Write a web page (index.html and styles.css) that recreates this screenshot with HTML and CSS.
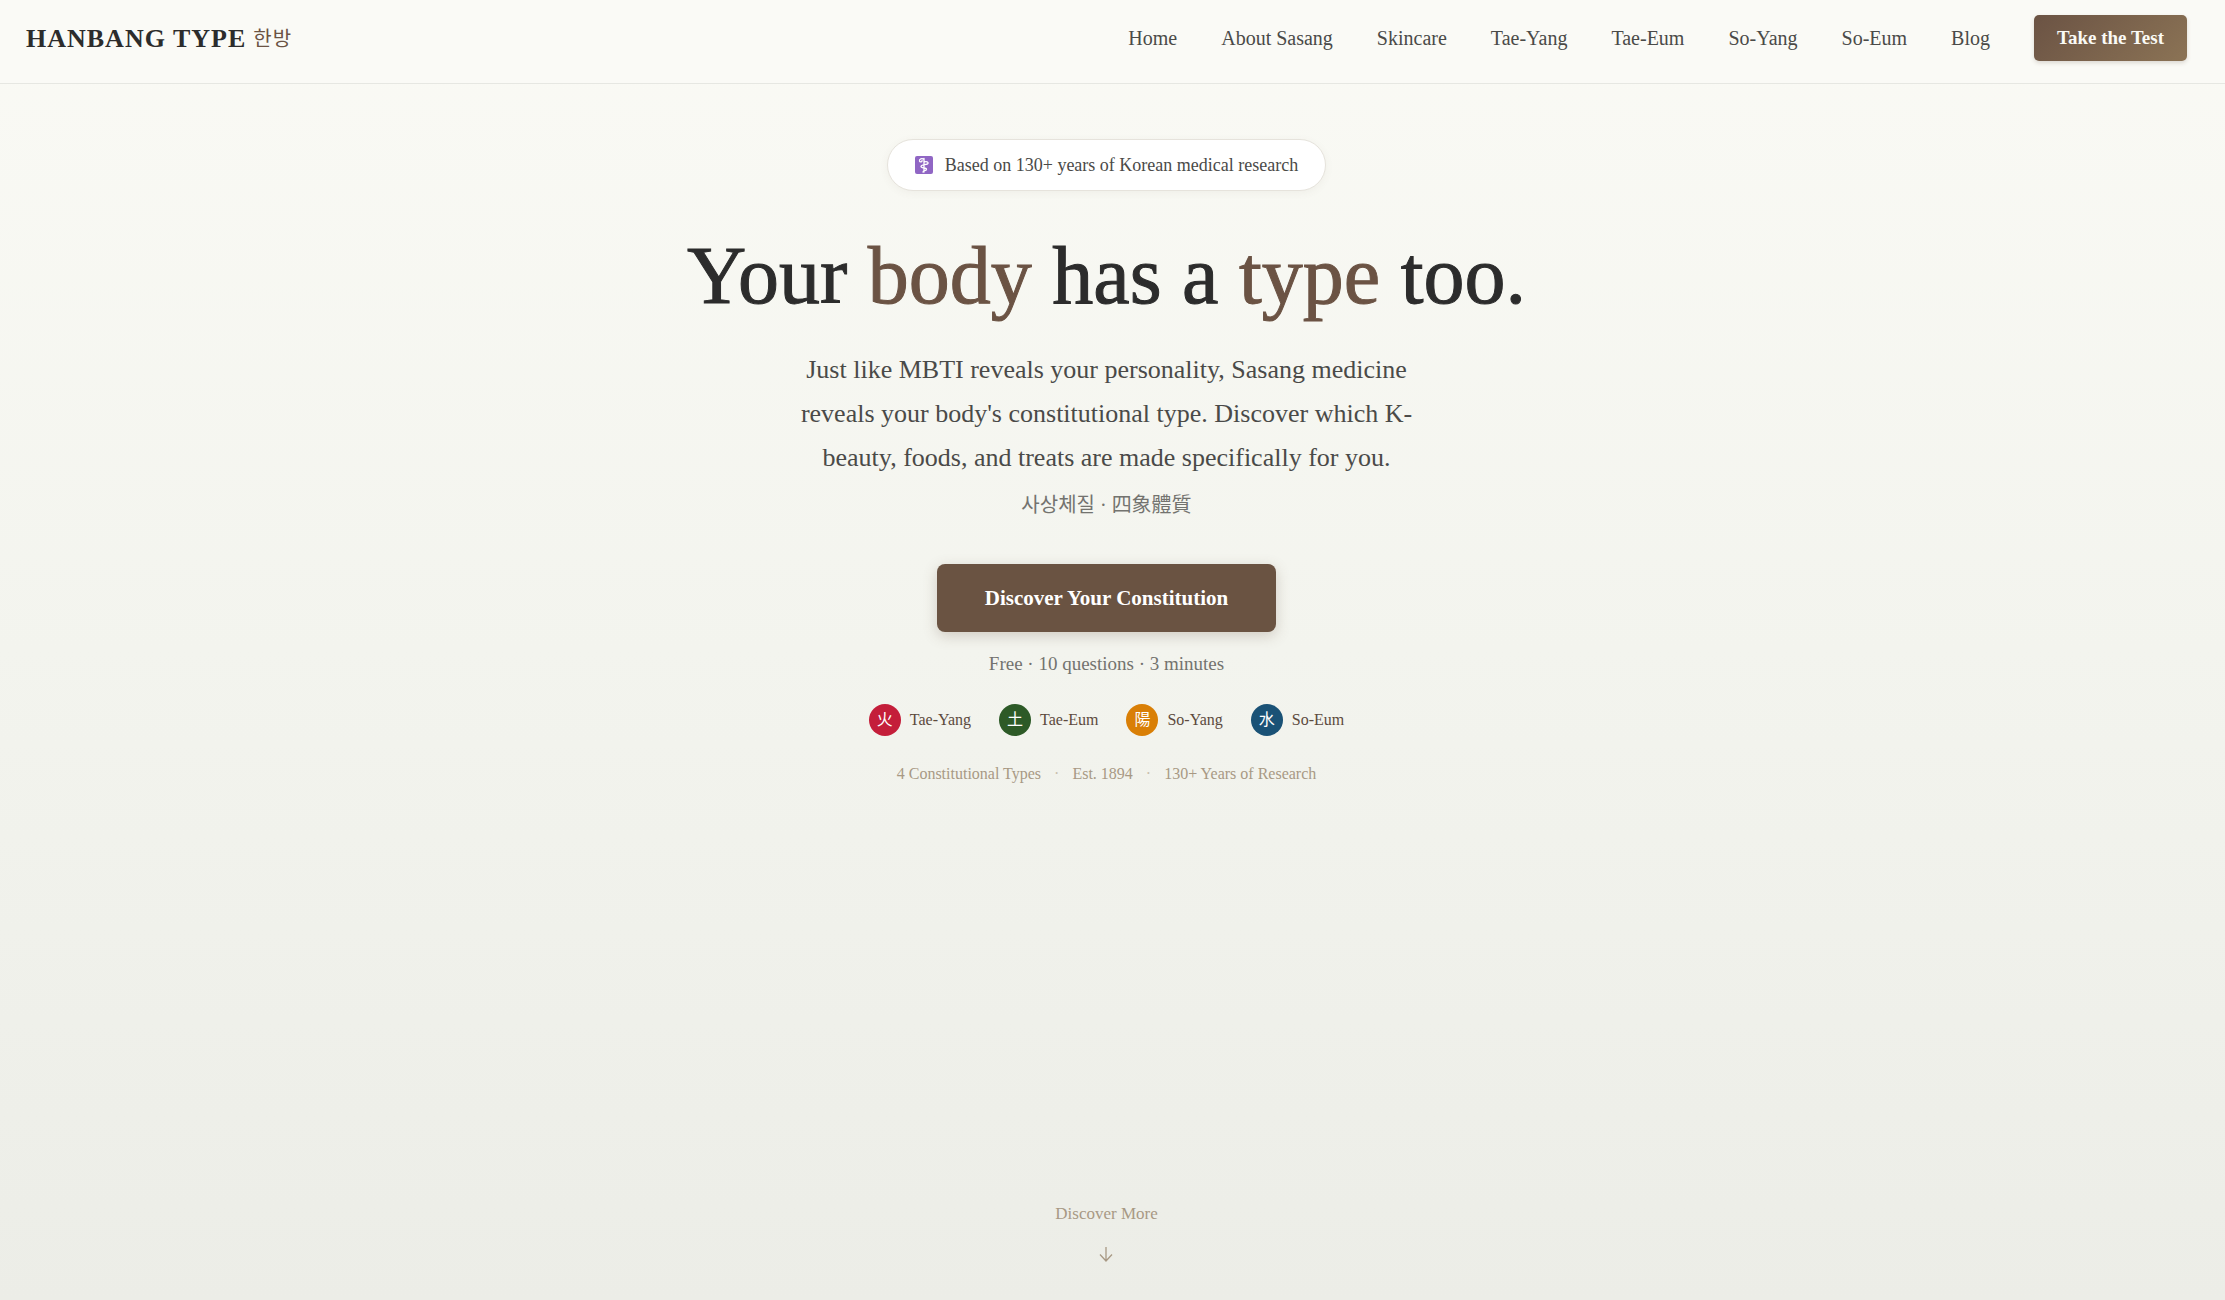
FILE: index.html
```html
<!DOCTYPE html>
<html lang="en">
<head>
<meta charset="utf-8">
<meta name="viewport" content="width=device-width, initial-scale=1">
<title>Hanbang Type</title>
<link rel="stylesheet" href="styles.css">
</head>
<body>
<header class="header">
  <a class="logo" href="#">HANBANG TYPE <span class="logo-ko" lang="ko">한방</span></a>
  <nav class="nav">
    <a href="#">Home</a>
    <a href="#">About Sasang</a>
    <a href="#">Skincare</a>
    <a href="#">Tae-Yang</a>
    <a href="#">Tae-Eum</a>
    <a href="#">So-Yang</a>
    <a href="#">So-Eum</a>
    <a href="#">Blog</a>
    <button class="nav-cta" type="button">Take the Test</button>
  </nav>
</header>
<main class="hero">
  <p class="badge">
    <svg class="badge-icon" viewBox="0 0 18 18" aria-hidden="true">
      <rect width="18" height="18" rx="2" fill="#9066c4"/>
      <path d="M9 2.5V16M9 3.5C7 1.800 4 3 4.500 5C5 6.500 7.500 6 7 4.500M9 6C11.500 5 13.500 6 13 7.500C12.500 9 6 8.500 6 10.500C6 12.500 12 11.500 11.500 13.500C11 15 8 14 8 16" fill="none" stroke="#fff" stroke-width="1.300" stroke-linecap="round"/>
    </svg>
    Based on 130+ years of Korean medical research
  </p>
  <h1 class="title">Your <em>body</em> has a <em>type</em> too.</h1>
  <p class="lead">Just like MBTI reveals your personality, Sasang medicine reveals your body's constitutional type. Discover which K-beauty, foods, and treats are made specifically for you.</p>
  <p class="native" lang="ko">사상체질 · <span lang="zh-Hant">四象體質</span></p>
  <button class="cta" type="button">Discover Your Constitution</button>
  <p class="note">Free · 10 questions · 3 minutes</p>
  <ul class="types">
    <li><span class="dot tae-yang" lang="zh-Hant">火</span>Tae-Yang</li>
    <li><span class="dot tae-eum" lang="zh-Hant">土</span>Tae-Eum</li>
    <li><span class="dot so-yang" lang="zh-Hant">陽</span>So-Yang</li>
    <li><span class="dot so-eum" lang="zh-Hant">水</span>So-Eum</li>
  </ul>
  <p class="facts"><span>4 Constitutional Types</span><span class="sep">·</span><span>Est. 1894</span><span class="sep">·</span><span>130+ Years of Research</span></p>
  <a class="more" href="#">Discover More
    <svg class="more-arrow" viewBox="0 0 14 16" aria-hidden="true"><path d="M7 1V15M1 8.500L7 15L13 8.500" fill="none" stroke="currentColor" stroke-width="1.300"/></svg>
  </a>
</main>
</body>
</html>
```

FILE: styles.css
```css
* { box-sizing: border-box; }

:root {
  --brown: #6b5344;
  --ink: #2c2c2c;
  --text: #4a4a48;
  --muted: #a89984;
  --gutter: 12px;
}

body {
  margin: 0;
  min-height: 100vh;
  display: flex;
  flex-direction: column;
  background: linear-gradient(#fafaf5, #f3f4ee 50%, #ecede7);
  color: var(--text);
  font-family: "Liberation Serif", "Noto Sans CJK KR", serif;
}

p, h1, ul { margin: 0; padding: 0; }
a { color: inherit; text-decoration: none; }
button { border: 0; font-family: inherit; cursor: pointer; }

.header {
  display: flex;
  align-items: flex-start;
  justify-content: space-between;
  height: 84px;
  padding: 14px calc(26px + var(--gutter)) 0 26px;
  border-bottom: 1px solid #e6e7e2;
  background: #fafaf6;
}

.logo {
  display: flex;
  gap: 7px;
  color: var(--ink);
  font-size: 26px;
  font-weight: 700;
  line-height: 50px;
  letter-spacing: 1px;
}
.logo-ko {
  color: var(--brown);
  font-size: 20px;
  font-weight: 400;
}

.nav {
  display: flex;
  align-items: center;
  gap: 44px;
  font-size: 20px;
}
.nav a { line-height: 48px; }
.nav-cta {
  height: 46px;
  padding: 0 23px;
  border-radius: 5px;
  background: linear-gradient(135deg, #6b5344, #8b7355);
  box-shadow: 0 2px 4px rgba(107, 83, 68, .2);
  color: #fafaf5;
  font-size: 19px;
  font-weight: 700;
}

.hero {
  flex: 1;
  display: flex;
  flex-direction: column;
  align-items: center;
  padding: 55px calc(24px + var(--gutter)) 38px 24px;
  text-align: center;
}

.badge {
  display: flex;
  align-items: center;
  gap: 12px;
  height: 52px;
  padding: 0 27px;
  border: 1px solid #e6e3dc;
  border-radius: 26px;
  background: #fff;
  box-shadow: 0 2px 8px rgba(107, 83, 68, .06);
  font-size: 18px;
}
.badge-icon { width: 18px; height: 18px; }

.title {
  margin-top: 36px;
  color: var(--ink);
  font-size: 82px;
  font-weight: 400;
  line-height: 98px;
  -webkit-text-stroke: 1px currentColor;
}
.title em { color: var(--brown); font-style: normal; }

.lead {
  max-width: 640px;
  margin-top: 23px;
  font-size: 26px;
  line-height: 44px;
}
.native {
  margin-top: 10px;
  color: #73736f;
  font-size: 20px;
  font-weight: 400;
  line-height: 30px;
}

.cta {
  height: 68px;
  margin-top: 44px;
  padding: 0 48px;
  border-radius: 8px;
  background: #6a5342;
  box-shadow: 0 4px 14px rgba(107, 83, 68, .25);
  color: #fff;
  font-size: 21px;
  font-weight: 700;
}
.note {
  margin-top: 20px;
  color: #73736f;
  font-size: 19px;
  line-height: 24px;
}

.types {
  display: flex;
  gap: 28px;
  margin-top: 28px;
  list-style: none;
  color: #5c4a3d;
  font-size: 16px;
}
.types li { display: flex; align-items: center; gap: 9px; }
.dot {
  display: grid;
  place-items: center;
  width: 32px;
  height: 32px;
  border-radius: 50%;
  color: #fff;
  font-size: 16px;
  line-height: 16px;
}
.tae-yang { background: #c41e3a; }
.tae-eum { background: #2d5a27; }
.so-yang { background: #d97f06; }
.so-eum { background: #1a5276; }

.facts {
  display: flex;
  gap: 13px;
  margin-top: 28px;
  color: var(--muted);
  font-size: 16px;
  line-height: 20px;
}
.sep { color: #c9bfae; }

.more {
  display: flex;
  flex-direction: column;
  align-items: center;
  gap: 22px;
  margin-top: auto;
  color: var(--muted);
  font-size: 17px;
  line-height: 20px;
}
.more-arrow { width: 14px; height: 16px; }

@media (max-width: 1300px) {
  .header { height: auto; flex-wrap: wrap; padding-bottom: 15px; }
  .nav { flex-wrap: wrap; gap: 20px; }
  .types { flex-wrap: wrap; justify-content: center; }
}
```
